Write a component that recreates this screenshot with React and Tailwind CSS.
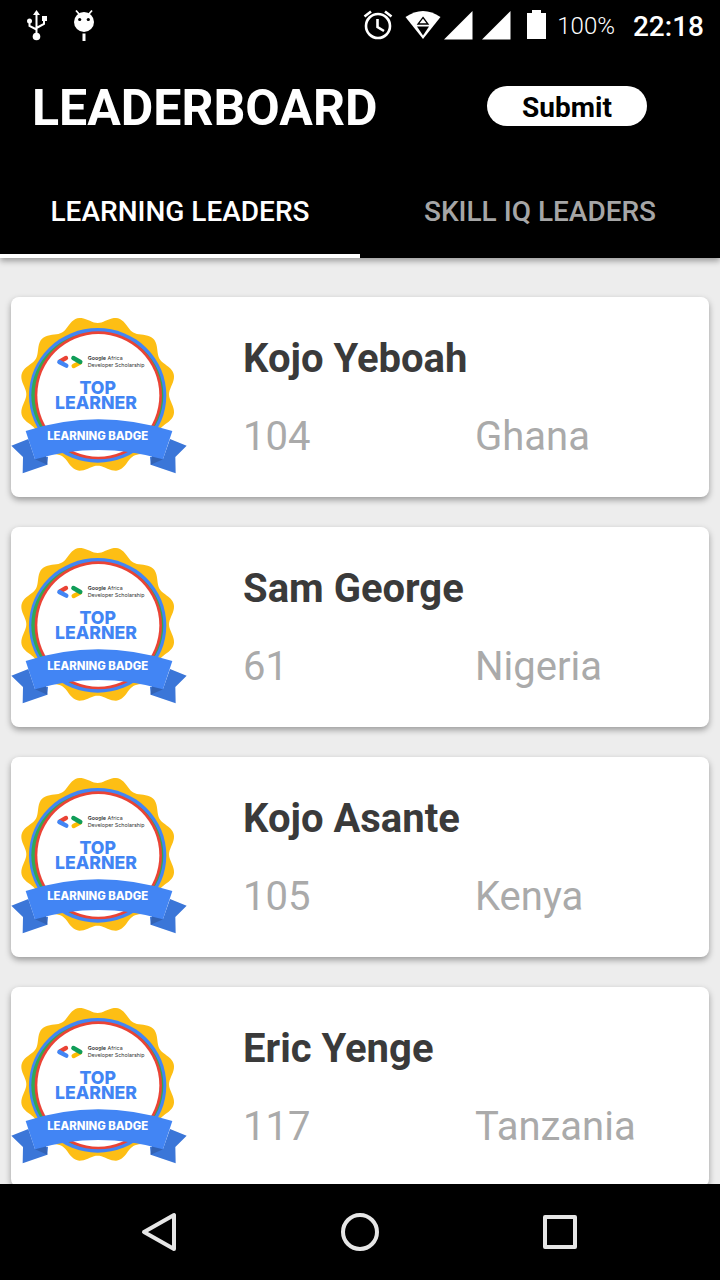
const leaders = [
  { name: 'Kojo Yeboah', hours: 104, country: 'Ghana' },
  { name: 'Sam George', hours: 61, country: 'Nigeria' },
  { name: 'Kojo Asante', hours: 105, country: 'Kenya' },
  { name: 'Eric Yenge', hours: 117, country: 'Tanzania' },
];

// Twelve-lobed outline of the rosette
const scallop = Array.from({ length: 240 }, (_, i) => {
  const a = (i / 240) * Math.PI * 2;
  const r = 225 - 11 * Math.cos(12 * a);
  return `${i ? 'L' : 'M'}${(293 + r * Math.cos(a)).toFixed(1)} ${(283 + r * Math.sin(a)).toFixed(1)}`;
}).join('') + 'Z';

function Badge() {
  return (
    <svg viewBox="33 -9 528 600" className="h-[200px] w-44" role="img" aria-label="Top learner badge">
      <path d={scallop} fill="#fdbe14" />
      <ellipse cx="293" cy="286" rx="206" ry="202" fill="#4285f4" />
      <ellipse cx="292" cy="286" rx="198" ry="190" fill="#34a853" />
      <ellipse cx="295" cy="286" rx="191" ry="192" fill="#ea4335" />
      <ellipse cx="295" cy="286" rx="183" ry="184" fill="#fff" />
      <g strokeWidth="13" strokeLinecap="round" fill="none">
        <path d="M180 184L198 174" stroke="#ea4335" />
        <path d="M178 186L199 197" stroke="#4285f4" />
        <path d="M221 198L240 188" stroke="#fbbc04" />
        <path d="M220 174L241 186" stroke="#0f9d58" />
      </g>
      <g fontFamily="Inter, sans-serif" fill="#333" fontSize="16">
        <text x="263" y="180"><tspan fontWeight="600">Google</tspan> Africa</text>
        <text x="263" y="200">Developer Scholarship</text>
      </g>
      <g fontFamily="Inter, sans-serif" fontWeight="800" fill="#4285f4" textAnchor="middle" fontSize="53">
        <text x="293" y="283">TOP</text>
        <text x="288" y="328">LEARNER</text>
      </g>
      <path d="M34 437L85 417L105 477L144 470L142 494L68 520L69 471Z" fill="#3b76d8" />
      <path d="M560 437L510 417L489 477L450 470L452 494L527 520L526 471Z" fill="#3b76d8" />
      <path d="M105 478L137 456L142 494Z" fill="#3363b5" />
      <path d="M489 478L457 456L452 494Z" fill="#3363b5" />
      <path d="M77 393Q293 322 517 393L489 478Q293 422 105 478Z" fill="#4285f4" />
      <text x="293" y="419" fontFamily="Inter, sans-serif" fontWeight="800" fill="#fff" textAnchor="middle" fontSize="34">LEARNING BADGE</text>
    </svg>
  );
}

function StatusBar() {
  return (
    <div className="flex h-[50px] items-center justify-between pl-[26px] pr-4 text-white">
      <div className="flex items-center">
        <svg viewBox="26 8 22 34" className="h-[34px] w-[22px]" fill="none" stroke="#fff" strokeWidth="2">
          <path d="M36.5 14V36M29.5 21V26L36.5 29.5M44 19V24L36.5 28" />
          <path d="M36.5 10L40 15H33Z M42 16H47V21H42Z" fill="#fff" stroke="none" />
          <circle cx="29.5" cy="21" r="2.5" fill="#fff" stroke="none" />
          <circle cx="36.5" cy="36.5" r="3.8" fill="#fff" stroke="none" />
        </svg>
        <svg viewBox="72 8 24 34" className="ml-6 h-[34px] w-6" fill="#fff">
          <circle cx="84" cy="22" r="10" />
          <path d="M76 10.5L79.5 14.5M92 10.5L88.5 14.5" stroke="#fff" strokeWidth="1.8" />
          <path d="M82.5 33.5H85.5V41H82.5Z" />
          <circle cx="79.7" cy="19.5" r="1.6" fill="#000" />
          <circle cx="88.3" cy="19.5" r="1.6" fill="#000" />
        </svg>
      </div>
      <div className="flex items-center">
        <svg viewBox="363 8 184 34" className="h-[34px] w-[184px]" fill="#fff">
          <circle cx="378" cy="26" r="12" fill="none" stroke="#fff" strokeWidth="2.6" />
          <path d="M377.5 19V27L384 31M364.5 16.5L371 11.500M391.5 16.5L385 11.5" fill="none" stroke="#fff" strokeWidth="2.6" />
          <path d="M405.5 17Q423 5 440.5 17L423 39Z" />
          <path d="M423 17.5L428 24H418Z" fill="none" stroke="#000" strokeWidth="1.3" />
          <path d="M417 26.600H429L423 35.500Z" fill="#000" />
          <path d="M532 10H541V13H546V39H527V13H532Z" />
          <path d="M472.5 11V39.5H444ZM510.5 11V39.5H482Z" />
        </svg>
        <span className="ml-2.5 pt-0.5 text-2xl font-light">100%</span>
        <span className="ml-[18px] pt-1 text-[28px] leading-8 font-medium">22:18</span>
      </div>
    </div>
  );
}

export default function App() {
  return (
    <div className="flex h-screen flex-col overflow-hidden bg-[#ededed] font-['Roboto',sans-serif]">
      <header className="relative shrink-0 bg-black text-white shadow-[0_3px_6px_rgba(0,0,0,0.35)]">
        <StatusBar />
        <div className="flex h-28 items-center justify-between pl-8 pr-[73px]">
          <h1 className="pt-1 text-[50px] leading-[60px] font-bold">LEADERBOARD</h1>
          <button className="h-10 w-40 rounded-full bg-white pt-1 text-[28px] leading-9 font-bold text-black">Submit</button>
        </div>
        <nav className="grid h-24 grid-cols-2 text-[28px] font-medium" role="tablist">
          <button role="tab" aria-selected="true" className="border-b-4 border-white pt-2">LEARNING LEADERS</button>
          <button role="tab" aria-selected="false" className="border-b-4 border-black pt-2 text-[#a6a6a6]">SKILL IQ LEADERS</button>
        </nav>
      </header>
      <main className="flex min-h-0 flex-1 flex-col gap-[30px] overflow-hidden px-[11px] pt-[39px]">
        {leaders.map((l) => (
          <article key={l.name} className="grid h-[200px] shrink-0 grid-cols-3 rounded-lg bg-white pr-0.5 shadow-[0_3px_6px_rgba(0,0,0,0.35)]">
            <Badge />
            <div className="col-span-2 grid grid-cols-2 content-start pt-9">
              <h2 className="col-span-2 text-[40px] leading-[52px] font-bold text-[#3a3a3a]">{l.name}</h2>
              <p className="pt-[26px] text-[40px] leading-[52px] text-[#aaaaaa]">{l.hours}</p>
              <p className="pt-[26px] text-[40px] leading-[52px] text-[#aaaaaa]">{l.country}</p>
            </div>
          </article>
        ))}
      </main>
      <footer className="flex h-24 shrink-0 items-center justify-center gap-[152px] bg-black">
        <button aria-label="Back" className="size-12">
          <svg viewBox="0 0 48 48" fill="none" stroke="#e6e6e6" strokeWidth="4" strokeLinejoin="round"><path d="M38 7V41L8 24Z" /></svg>
        </button>
        <button aria-label="Home" className="size-12">
          <svg viewBox="0 0 48 48" fill="none" stroke="#e6e6e6" strokeWidth="4"><circle cx="24" cy="24" r="17" /></svg>
        </button>
        <button aria-label="Recent apps" className="size-12">
          <svg viewBox="0 0 48 48" fill="none" stroke="#e6e6e6" strokeWidth="4" strokeLinejoin="round"><path d="M9 9H39V39H9Z" /></svg>
        </button>
      </footer>
    </div>
  );
}
